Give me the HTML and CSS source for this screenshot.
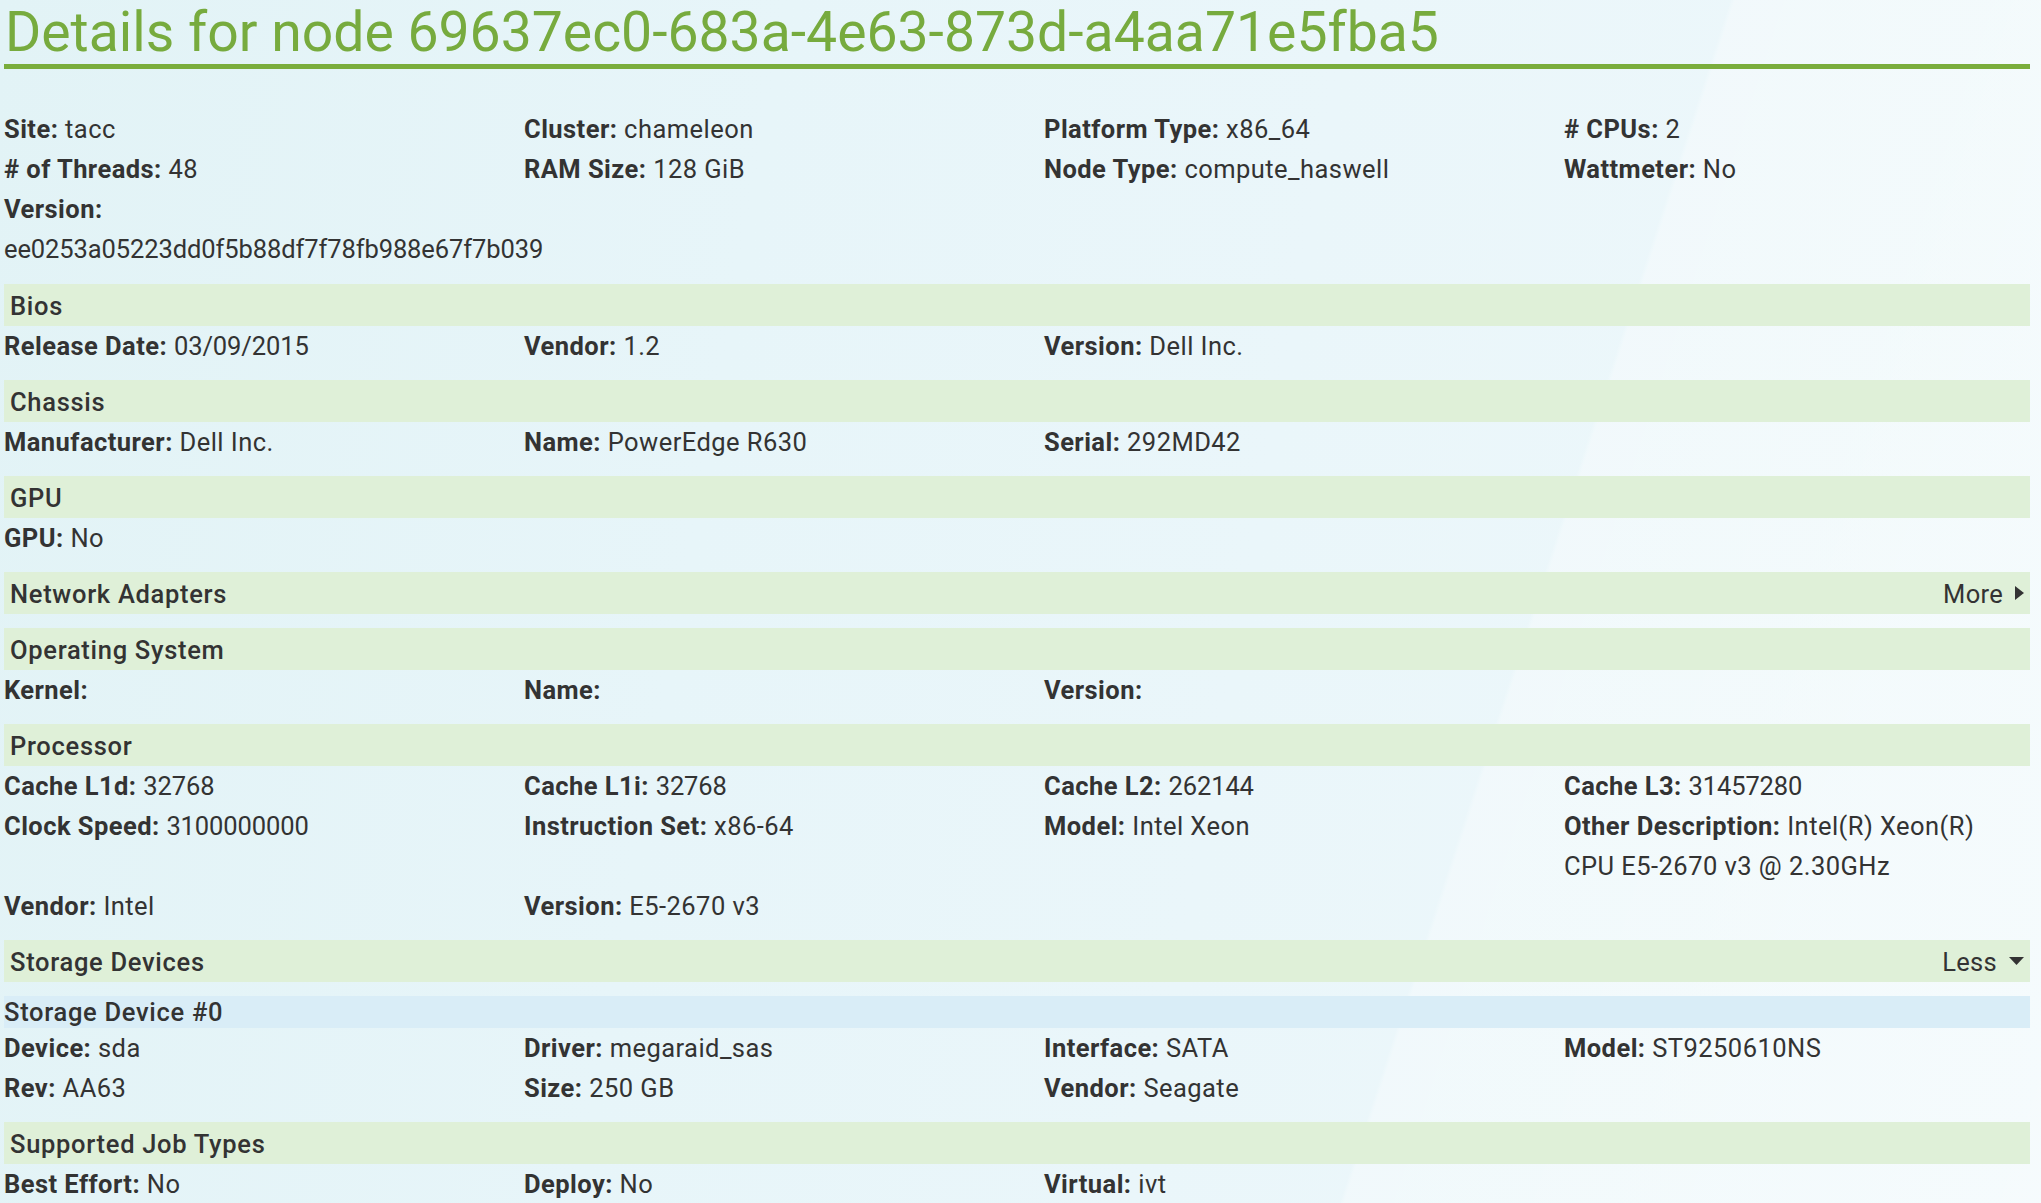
FILE: index.html
```html
<!DOCTYPE html>
<html lang="en">
<head>
<meta charset="utf-8">
<title>Node details</title>
<link rel="stylesheet" href="styles.css">
</head>
<body>
<div class="page">
  <h1 class="title">Details for node 69637ec0-683a-4e63-873d-a4aa71e5fba5</h1>

  <section class="sec">
    <div class="grid">
      <div class="cell"><b>Site:</b> tacc</div>
      <div class="cell"><b>Cluster:</b> chameleon</div>
      <div class="cell"><b>Platform Type:</b> x86_64</div>
      <div class="cell"><b># CPUs:</b> 2</div>
      <div class="cell"><b># of Threads:</b> 48</div>
      <div class="cell"><b>RAM Size:</b> 128 GiB</div>
      <div class="cell"><b>Node Type:</b> compute_haswell</div>
      <div class="cell"><b>Wattmeter:</b> No</div>
      <div class="cell"><b>Version:</b> <span class="num">ee0253a05223dd0f5b88df7f78fb988e67f7b039</span></div>
    </div>
  </section>

  <section class="sec">
    <div class="bar"><span>Bios</span></div>
    <div class="grid">
      <div class="cell"><b>Release Date:</b> <span class="num">03/09/2015</span></div>
      <div class="cell"><b>Vendor:</b> 1.2</div>
      <div class="cell"><b>Version:</b> Dell Inc.</div>
    </div>
  </section>

  <section class="sec">
    <div class="bar"><span>Chassis</span></div>
    <div class="grid">
      <div class="cell"><b>Manufacturer:</b> Dell Inc.</div>
      <div class="cell"><b>Name:</b> PowerEdge R630</div>
      <div class="cell"><b>Serial:</b> 292MD42</div>
    </div>
  </section>

  <section class="sec">
    <div class="bar"><span>GPU</span></div>
    <div class="grid">
      <div class="cell"><b>GPU:</b> No</div>
    </div>
  </section>

  <section class="sec">
    <div class="bar"><span>Network Adapters</span>
      <span class="toggle">More <svg class="tri-r" width="9" height="14" viewBox="0 0 9 14"><path d="M0 0 L9 7 L0 14 Z" fill="#333"/></svg></span>
    </div>
  </section>

  <section class="sec">
    <div class="bar"><span>Operating System</span></div>
    <div class="grid">
      <div class="cell"><b>Kernel:</b></div>
      <div class="cell"><b>Name:</b></div>
      <div class="cell"><b>Version:</b></div>
    </div>
  </section>

  <section class="sec">
    <div class="bar"><span>Processor</span></div>
    <div class="grid">
      <div class="cell"><b>Cache L1d:</b> <span class="num">32768</span></div>
      <div class="cell"><b>Cache L1i:</b> <span class="num">32768</span></div>
      <div class="cell"><b>Cache L2:</b> <span class="num">262144</span></div>
      <div class="cell"><b>Cache L3:</b> <span class="num">31457280</span></div>
      <div class="cell"><b>Clock Speed:</b> <span class="num">3100000000</span></div>
      <div class="cell"><b>Instruction Set:</b> x86-64</div>
      <div class="cell"><b>Model:</b> Intel Xeon</div>
      <div class="cell"><b>Other Description:</b> <span class="nw">Intel(R) Xeon(R)</span> <span class="nw">CPU E5-2670 v3 @ 2.30GHz</span></div>
      <div class="cell"><b>Vendor:</b> Intel</div>
      <div class="cell"><b>Version:</b> E5-2670 v3</div>
    </div>
  </section>

  <section class="sec">
    <div class="bar"><span>Storage Devices</span>
      <span class="toggle">Less <svg class="tri-d" width="15" height="8" viewBox="0 0 15 8"><path d="M0 0 L15 0 L7.5 8 Z" fill="#333"/></svg></span>
    </div>
    <div class="sub">Storage Device #0</div>
    <div class="grid">
      <div class="cell"><b>Device:</b> sda</div>
      <div class="cell"><b>Driver:</b> megaraid_sas</div>
      <div class="cell"><b>Interface:</b> SATA</div>
      <div class="cell"><b>Model:</b> ST9250610NS</div>
      <div class="cell"><b>Rev:</b> AA63</div>
      <div class="cell"><b>Size:</b> 250 GB</div>
      <div class="cell"><b>Vendor:</b> Seagate</div>
    </div>
  </section>

  <section class="sec">
    <div class="bar"><span>Supported Job Types</span></div>
    <div class="grid">
      <div class="cell"><b>Best Effort:</b> No</div>
      <div class="cell"><b>Deploy:</b> No</div>
      <div class="cell"><b>Virtual:</b> ivt</div>
    </div>
  </section>
</div>
</body>
</html>
```
FILE: styles.css
```css
html, body {
  margin: 0;
  padding: 0;
}
body {
  min-height: 1203px;
  font-family: Roboto, "Noto Sans", "Liberation Sans", sans-serif;
  font-size: 25.5px;
  line-height: 40px;
  color: #333333;
  background:
    linear-gradient(108deg, rgba(255,255,255,0) 0%, rgba(255,255,255,0) 71%, rgba(255,255,255,0.3) 71.2%, rgba(255,255,255,0.45) 100%),
    linear-gradient(100deg, #e2f3f6 0%, #e7f5f9 35%, #eaf6fa 60%, #eef8fb 100%);
  overflow: hidden;
}
.page {
  width: 2026px;
  padding: 0 0 0 4px;
}
.title {
  margin: 0 0 40px 0;
  padding: 3px 0 1px 1px;
  font-size: 55.3px;
  line-height: 60px;
  font-weight: 400;
  color: #77ab3e;
  border-bottom: 5px solid #7aad3c;
  white-space: nowrap;
}
.sec {
  margin-bottom: 14px;
}
.sec:first-of-type {
  margin-bottom: 15px;
}
.grid {
  display: grid;
  grid-template-columns: 520px 520px 520px 1fr;
}
.cell {
  min-height: 40px;
  padding-right: 10px;
  letter-spacing: 0.45px;
}
.cell b {
  font-weight: 700;
}
.num {
  letter-spacing: -0.1px;
}
.nw {
  white-space: nowrap;
}
.bar {
  display: flex;
  justify-content: space-between;
  align-items: center;
  height: 42px;
  padding: 0 6px;
  background: #dff0d8;
  font-weight: 500;
  line-height: 40px;
  letter-spacing: 0.7px;
}
.bar > span:first-child {
  padding-top: 2px;
}
.toggle {
  display: flex;
  align-items: center;
  gap: 12px;
  font-weight: 400;
  letter-spacing: 0.3px;
  padding-top: 2px;
}
.tri-r {
  margin-top: -2px;
}
.tri-d {
  margin-top: -2px;
}
.sub {
  margin-top: 14px;
  height: 32px;
  line-height: 32px;
  background: #d9edf7;
  font-weight: 500;
  letter-spacing: 0.7px;
}
```
